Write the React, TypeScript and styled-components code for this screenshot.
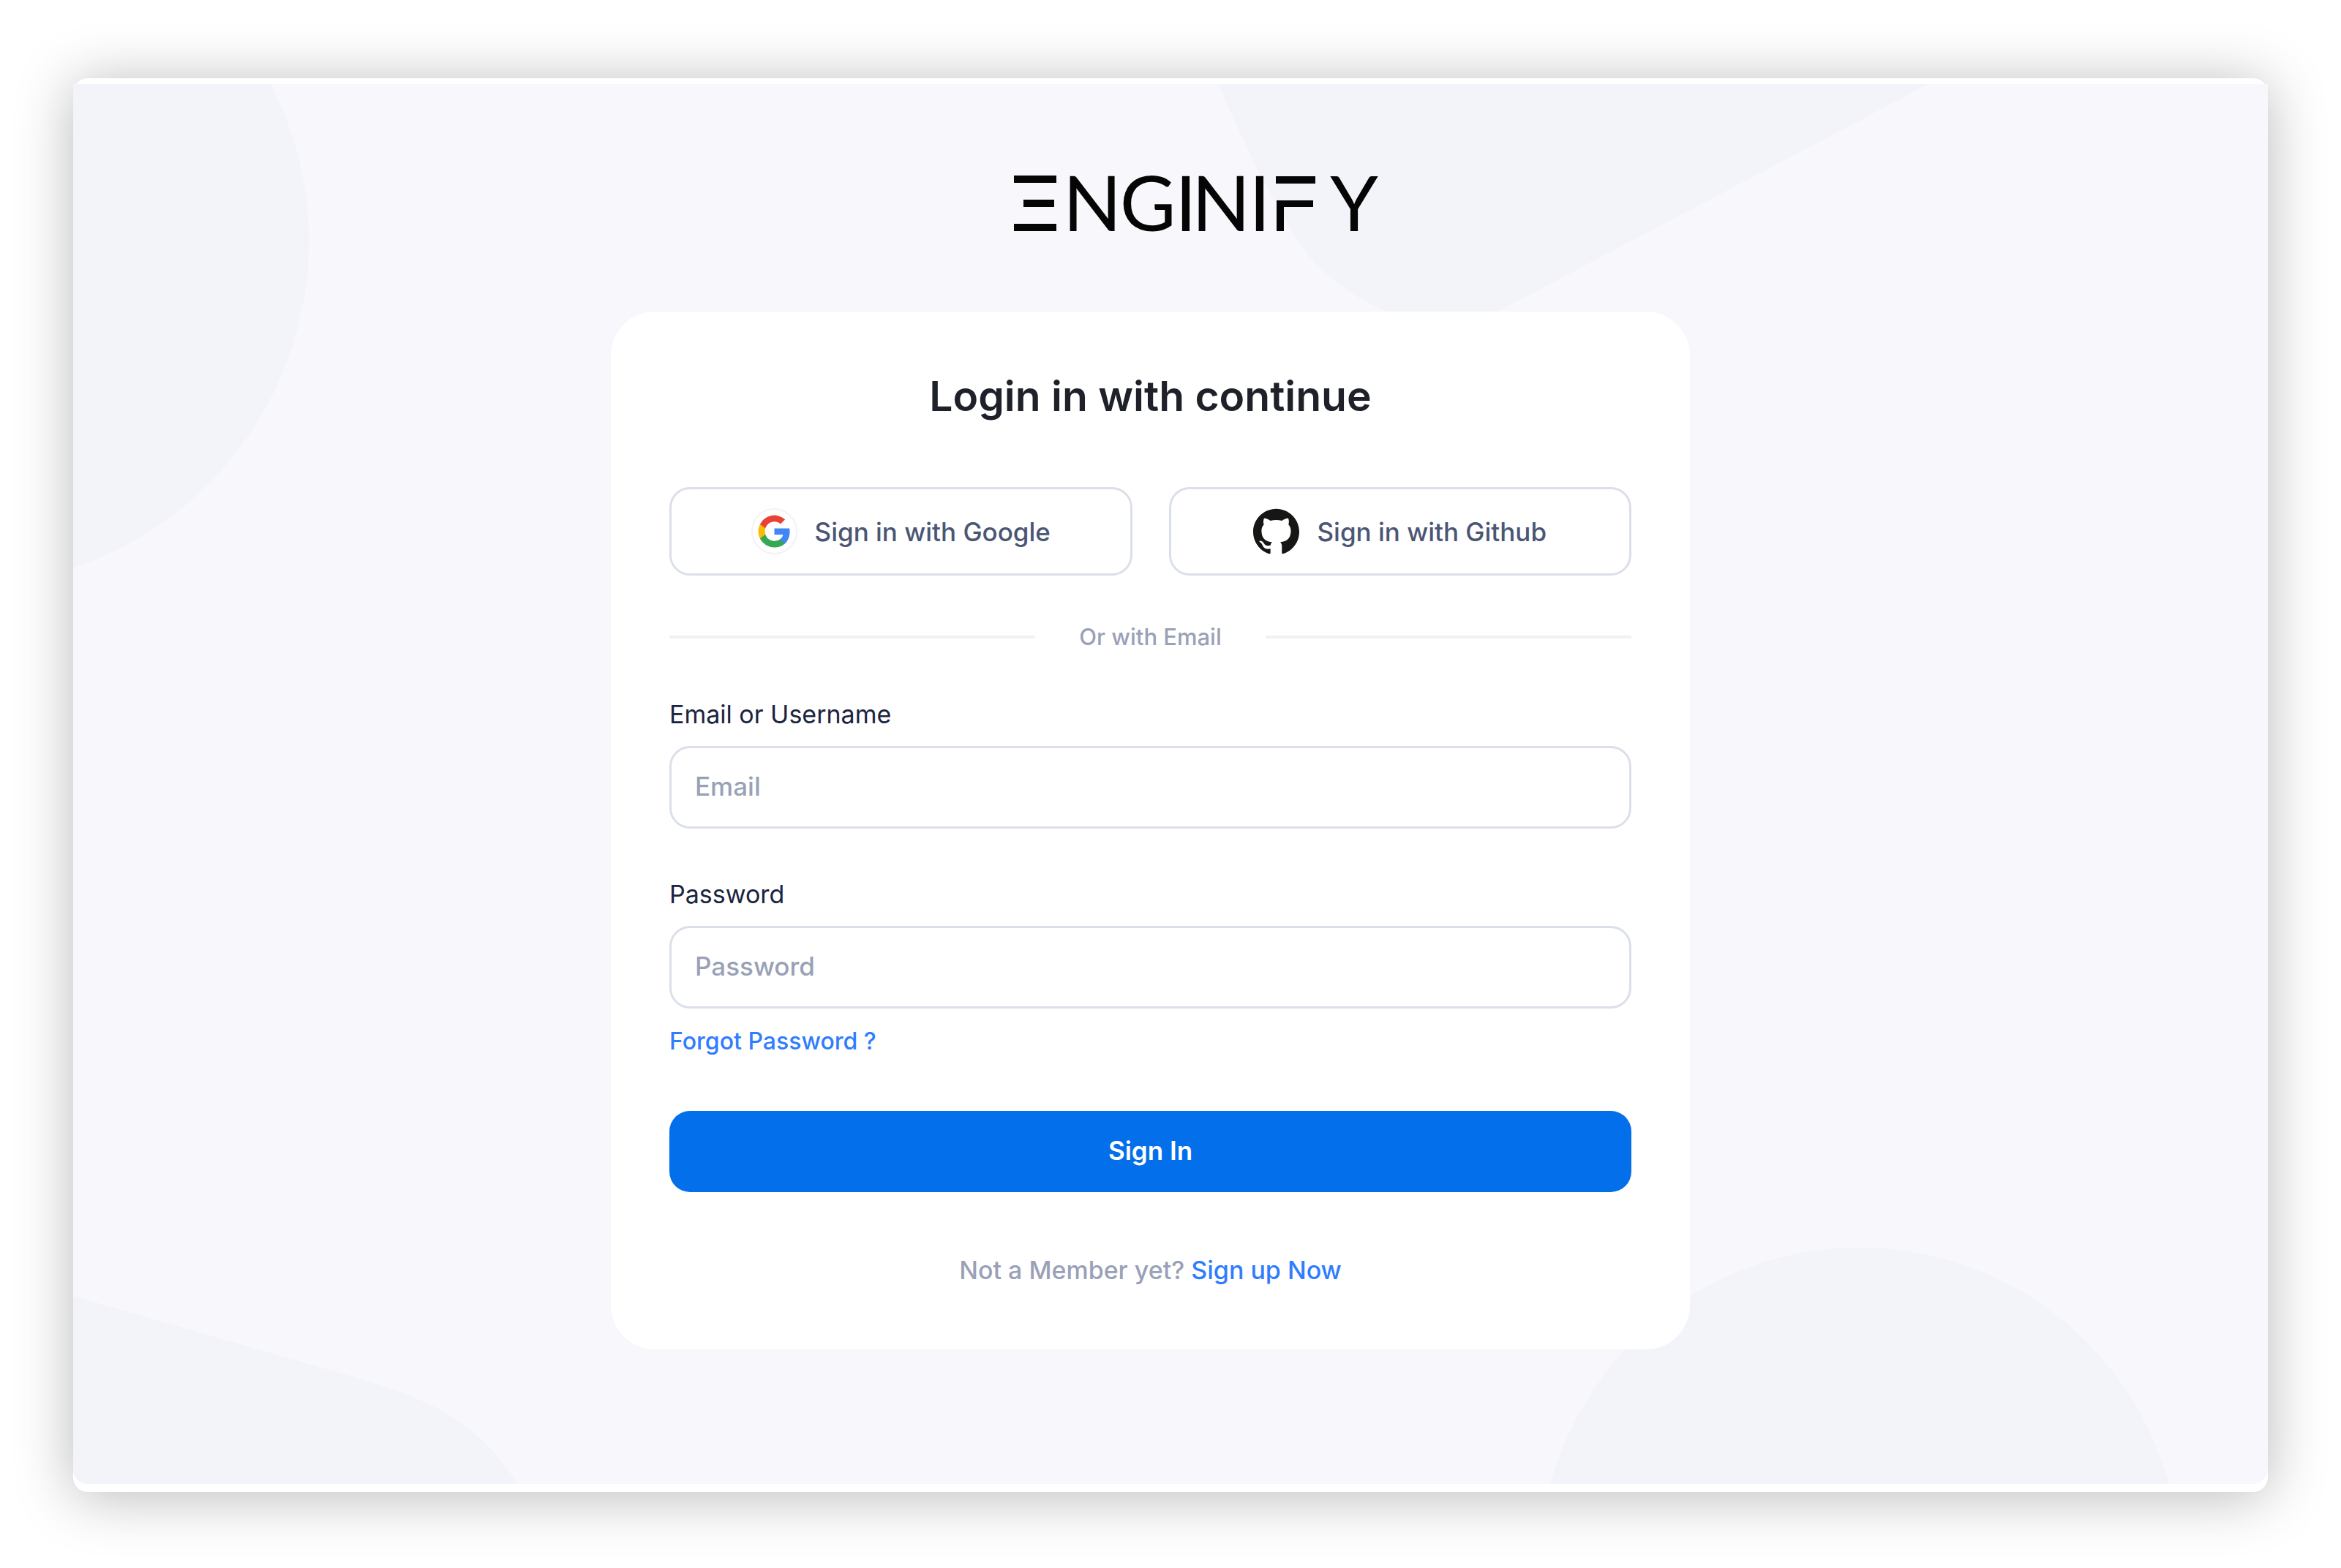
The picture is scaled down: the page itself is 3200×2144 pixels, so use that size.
import React from "react";
import styled, { createGlobalStyle } from "styled-components";
import { SiGithub } from "react-icons/si";

const GlobalStyle = createGlobalStyle`
  *, *::before, *::after { box-sizing: border-box; }
  body {
    margin: 0;
    background: #ffffff;
    font-family: Inter, "Liberation Sans", sans-serif;
  }
`;

const Page = styled.div`
  min-height: 100vh;
  padding: 107px 100px 104px;
  display: flex;
  flex-direction: column;
`;

const Frame = styled.div`
  flex: 1;
  display: flex;
  flex-direction: column;
  padding: 8px 0 11px;
  background: #ffffff;
  border-radius: 20px;
  box-shadow: 0 6px 80px rgba(0, 0, 0, 0.28);
`;

const Screen = styled.div`
  position: relative;
  flex: 1;
  display: flex;
  flex-direction: column;
  align-items: center;
  padding: 95px 55px 64px 0;
  overflow: hidden;
  border-radius: 0 0 20px 20px;
  background: #f7f7fc;
`;

const Backdrop = styled.svg`
  position: absolute;
  inset: 0;
  width: 100%;
  height: 100%;
  fill: #f2f4f9;
`;

const Content = styled.main`
  position: relative;
  width: 100%;
  max-width: 1475px;
  display: flex;
  flex-direction: column;
  align-items: center;
  gap: 76px;
`;

const LogoMark = styled.svg`
  display: block;
  width: 624px;
  height: 140px;
  fill: #050505;
  font-family: Lato, sans-serif;
  font-size: 105px;
  text-anchor: middle;
`;

const Card = styled.form`
  width: 100%;
  padding: 80px 80px 86px;
  display: flex;
  flex-direction: column;
  background: #ffffff;
  border-radius: 60px;
`;

const Title = styled.h1`
  margin: 0 0 88px;
  font-size: 57px;
  line-height: 72px;
  font-weight: 600;
  text-align: center;
  color: #1e2129;
`;

const SocialRow = styled.div`
  display: grid;
  grid-template-columns: 1fr 1fr;
  gap: 50px;
`;

const SocialButton = styled.button`
  height: 121px;
  display: flex;
  align-items: center;
  justify-content: center;
  gap: 24px;
  border: 3px solid #dbdfe9;
  border-radius: 28px;
  background: #ffffff;
  color: #4b5675;
  font: 500 35px/44px Inter, sans-serif;
  cursor: pointer;

  svg {
    width: 63px;
    height: 63px;
    flex: none;
  }
`;

const Separator = styled.div`
  margin: 64px 0;
  display: flex;
  align-items: center;
  gap: 60px;
  font-size: 31px;
  line-height: 40px;
  font-weight: 500;
  color: #99a1b7;

  &::before,
  &::after {
    content: "";
    flex: 1;
    height: 4px;
    background: #f0f1f3;
  }
`;

const Fields = styled.div`
  display: flex;
  flex-direction: column;
  gap: 68px;
`;

const Field = styled.div`
  display: flex;
  flex-direction: column;
  gap: 21px;
`;

const Label = styled.label`
  font-size: 34px;
  line-height: 44px;
  color: #1b2440;
`;

const Input = styled.input`
  width: 100%;
  height: 113px;
  padding: 0 32px 4px;
  border: 3px solid #dbdfe9;
  border-radius: 28px;
  outline: none;
  background: #ffffff;
  color: #1b2440;
  font: 500 35px/44px Inter, sans-serif;

  &::placeholder {
    color: #99a1b7;
    opacity: 1;
  }
`;

const Link = styled.a`
  color: #2f7dff;
  text-decoration: none;
`;

const ForgotLink = styled(Link)`
  align-self: flex-start;
  margin: 25px 0 75px;
  font-size: 32px;
  line-height: 40px;
  font-weight: 500;
`;

const SubmitButton = styled.button`
  height: 111px;
  padding: 0 32px 4px;
  border: 0;
  border-radius: 28px;
  background: #046fea;
  color: #ffffff;
  font: 600 35px/44px Inter, sans-serif;
  cursor: pointer;
`;

const SignUp = styled.p`
  margin: 85px 0 0;
  font-size: 34px;
  line-height: 44px;
  font-weight: 500;
  text-align: center;
  color: #99a1b7;
`;

function BackdropShapes() {
  return (
    <Backdrop viewBox="0 0 3000 1914" preserveAspectRatio="xMidYMid slice" aria-hidden="true">
      <circle cx="-148" cy="215" r="470" />
      <path d="M1566 0C1600 82 1630 140 1668 205C1700 258 1745 287 1791 310C1840 332 1900 335 1949 310L2536 0Z" />
      <path d="M0 1657L380 1767C480 1795 555 1828 607 1914H0Z" />
      <circle cx="2442" cy="2029" r="438" />
    </Backdrop>
  );
}

function Logo() {
  return (
    <LogoMark viewBox="0 -20 624 140">
      <g>
        <rect x="125" y="10" width="58" height="10" />
        <rect x="138" y="43" width="42" height="10" />
        <rect x="125" y="76" width="58" height="10" />
      </g>
      <text x="232 308 360 408 461" y="86">NGINI</text>
      <g>
        <rect x="483" y="11" width="54" height="10" />
        <path d="M484 44H534V53H494V86H484Z" />
      </g>
      <text x="590" y="86">Y</text>
    </LogoMark>
  );
}

function GoogleIcon() {
  return (
    <svg viewBox="0 0 62 62" aria-hidden="true">
      <circle cx="31" cy="31" r="30" fill="#ffffff" stroke="#f3f3f3" strokeWidth="2" />
      <g transform="translate(9.4 9.4) scale(2.4)">
        <path fill="#4285f4" d="M17.64 9.2c0-.64-.06-1.25-.16-1.84H9v3.48h4.84a4.14 4.14 0 0 1-1.8 2.72v2.26h2.92c1.7-1.57 2.68-3.88 2.68-6.62z" />
        <path fill="#34a853" d="M9 18c2.43 0 4.47-.8 5.96-2.18l-2.92-2.26c-.8.54-1.84.86-3.04.86-2.34 0-4.33-1.58-5.04-3.7H.96v2.33A9 9 0 0 0 9 18z" />
        <path fill="#fbbc05" d="M3.96 10.71a5.4 5.4 0 0 1 0-3.42V4.96H.96a9 9 0 0 0 0 8.08l3-2.33z" />
        <path fill="#ea4335" d="M9 3.58c1.32 0 2.5.45 3.44 1.35l2.58-2.58A9 9 0 0 0 .96 4.96l3 2.33C4.67 5.16 6.66 3.58 9 3.58z" />
      </g>
    </svg>
  );
}

export default function App() {
  return (
    <>
      <GlobalStyle />
      <Page>
        <Frame>
          <Screen>
            <BackdropShapes />
            <Content>
              <Logo />
              <Card onSubmit={(event: React.FormEvent) => event.preventDefault()}>
                <Title>Login in with continue</Title>
                <SocialRow>
                  <SocialButton type="button">
                    <GoogleIcon />
                    Sign in with Google
                  </SocialButton>
                  <SocialButton type="button">
                    <SiGithub color="#161614" aria-hidden="true" />
                    Sign in with Github
                  </SocialButton>
                </SocialRow>
                <Separator>Or with Email</Separator>
                <Fields>
                  <Field>
                    <Label htmlFor="email">Email or Username</Label>
                    <Input id="email" type="text" placeholder="Email" />
                  </Field>
                  <Field>
                    <Label htmlFor="password">Password</Label>
                    <Input id="password" type="password" placeholder="Password" />
                  </Field>
                </Fields>
                <ForgotLink href="#forgot">Forgot Password ?</ForgotLink>
                <SubmitButton type="submit">Sign In</SubmitButton>
                <SignUp>
                  Not a Member yet? <Link href="#signup">Sign up Now</Link>
                </SignUp>
              </Card>
            </Content>
          </Screen>
        </Frame>
      </Page>
    </>
  );
}
